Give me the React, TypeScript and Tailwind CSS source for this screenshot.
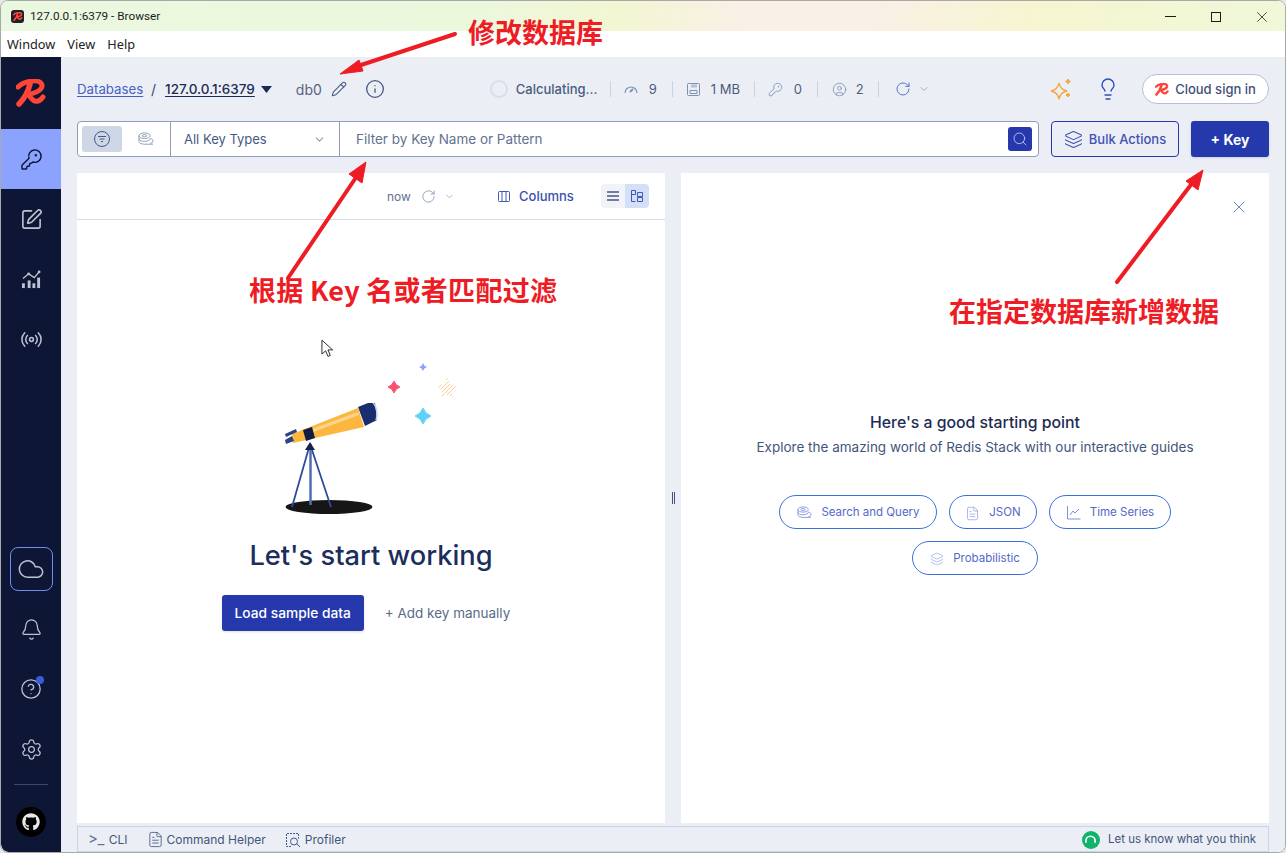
import {
  Bell,
  ChevronDown,
  CircleHelp,
  CircleUser,
  Cloud,
  FileText,
  Info,
  KeyRound,
  Layers,
  Lightbulb,
  Pencil,
  Radio,
  RotateCw,
  Search,
  Settings,
  SquarePen,
  X,
} from "lucide-react";
import { FaGithub } from "react-icons/fa";

const uiFont = "font-['Inter','Noto_Sans',sans-serif]";

function RedisLogo({ className }: { className?: string }) {
  return (
    <svg viewBox="0 0 30 28" fill="none" className={className}>
      <path d="M2 8C8 2 21 0 25 4C29 9 21 15 11 15" stroke="#ff4438" strokeWidth="5" strokeLinecap="round" />
      <path d="M14 5C12 13 7 21 3 25" stroke="#ff4438" strokeWidth="5.5" strokeLinecap="round" />
      <path d="M13 16C17 23 22 25 27 18" stroke="#ff4438" strokeWidth="5" strokeLinecap="round" />
    </svg>
  );
}

function StackIcon({ className }: { className?: string }) {
  return (
    <svg viewBox="0 0 18 16" fill="none" stroke="currentColor" strokeWidth="1" className={className}>
      <ellipse cx="8" cy="4" rx="6" ry="3" />
      <ellipse cx="8" cy="4" rx="2.5" ry="1.2" />
      <path d="M2 4v3c0 1.7 2.7 3 6 3s6-1.300 6-3" />
      <path d="M2 7v3c0 1.700 2.700 3 6 3h9" />
      <path d="M14 7c2 .3 3 1 3 2.500S16 12 14 12" />
    </svg>
  );
}

function ChartIcon({ className }: { className?: string }) {
  return (
    <svg viewBox="0 0 22 20" fill="currentColor" className={className}>
      <rect x="1" y="14" width="3" height="5" />
      <rect x="7" y="11" width="3" height="8" />
      <rect x="12" y="14" width="3" height="5" />
      <rect x="17" y="8" width="3" height="11" />
      <path d="M2 9l6-5 6 4 5-6" fill="none" stroke="currentColor" strokeWidth="1.500" />
      <circle cx="8" cy="4" r="1.500" />
      <circle cx="19" cy="2" r="1.500" />
    </svg>
  );
}

function GaugeIcon() {
  return (
    <svg viewBox="0 0 14 10" fill="none" stroke="#7f90b4" strokeWidth="1.200" className="w-[14px] h-[10px]">
      <path d="M1 9a6 6 0 0 1 12 0" />
      <path d="M6 8l3-3" strokeWidth="1.800" />
    </svg>
  );
}

function MemoryIcon() {
  return (
    <svg viewBox="0 0 13 13" fill="none" stroke="#7f90b4" className="w-[13px] h-[13px]">
      <rect x=".5" y=".5" width="12" height="12" rx="1" />
      <path d="M3 7.500h7v3H3zM5 1.500v3M7 1.500v3M9 1.500v3" />
    </svg>
  );
}

function Sep() {
  return <div className="w-px h-[16px] bg-[#c8d3e4]" />;
}

function SideItem({ children, className = "" }: { children: React.ReactNode; className?: string }) {
  return <div className={`h-[60px] flex items-center justify-center text-[#bcc3d3] ${className}`}>{children}</div>;
}

function Sidebar() {
  return (
    <aside className="w-[60px] h-full bg-[#0d1634] flex flex-col shrink-0 rounded-bl-lg">
      <div className="h-[72px] flex items-center justify-center">
        <RedisLogo className="w-[30px] h-[28px]" />
      </div>
      <SideItem className="bg-[#8ba2ff] !text-[#0d1634]">
        <KeyRound size={23} strokeWidth={1.500} />
      </SideItem>
      <SideItem>
        <SquarePen size={23} strokeWidth={1.700} />
      </SideItem>
      <SideItem>
        <ChartIcon className="w-[21px] h-[19px]" />
      </SideItem>
      <SideItem>
        <Radio size={23} strokeWidth={1.600} />
      </SideItem>
      <div className="flex-1" />
      <div className="w-[43px] h-[44px] mx-auto mb-[8px] rounded-[8px] border border-[#6f8cf0] flex items-center justify-center text-[#bcc3d3]">
        <Cloud size={28} strokeWidth={1.300} />
      </div>
      <SideItem>
        <Bell size={23} strokeWidth={1.300} />
      </SideItem>
      <SideItem className="relative">
        <CircleHelp size={22} strokeWidth={1.400} />
        <span className="absolute top-[17px] left-[35px] w-[8px] h-[8px] rounded-full bg-[#3a5bd9]" />
      </SideItem>
      <SideItem>
        <Settings size={23} strokeWidth={1.300} />
      </SideItem>
      <div className="mx-[13px] mt-[5px] h-px bg-[#3a4870]" />
      <div className="h-[67px] pt-[6px] flex items-center justify-center">
        <div className="w-[30px] h-[30px] rounded-full bg-black flex items-center justify-center text-[#e8e8e8]">
          <FaGithub size={18} />
        </div>
      </div>
    </aside>
  );
}

function TopBar() {
  return (
    <div className="h-[64px] flex items-center text-[14px] text-[#4a5b80]">
      <span className="pt-px text-[#465fc6] underline underline-offset-2 w-[66px] text-[13.250px]">Databases</span>
      <span className="ml-[8px] text-[#33466e]">/</span>
      <span className="ml-[9px] font-medium text-[#1c2b55] underline underline-offset-2 text-[13.500px]">127.0.0.1:6379</span>
      <svg viewBox="0 0 11 7" className="ml-[6px] w-[11px] h-[7px]" fill="#1c2b55">
        <path d="M0 0h11L5.500 7z" />
      </svg>
      <span className="ml-[24px] w-[28px] text-[#55637f]">db0</span>
      <Pencil size={16} strokeWidth={1.600} className="ml-[7px] text-[#465a86]" />
      <Info size={20} strokeWidth={1.600} className="ml-[18px] text-[#465a86]" />
      <div className="ml-[105px] w-[18px] h-[18px] rounded-full border-2 border-[#d6deea]" />
      <span className="ml-[8px] pt-px w-[81px] text-[13px] font-medium text-[#4a5b80] whitespace-nowrap">Calculating...</span>
      <div className="ml-[13px]"><Sep /></div>
      <div className="ml-[13px]"><GaugeIcon /></div>
      <span className="ml-[11px] pt-px w-[10px] text-[13px]">9</span>
      <div className="ml-[13px]"><Sep /></div>
      <div className="ml-[14px]"><MemoryIcon /></div>
      <span className="ml-[11px] pt-px w-[30px] text-[13px] whitespace-nowrap">1 MB</span>
      <div className="ml-[13px]"><Sep /></div>
      <KeyRound size={15} strokeWidth={1.300} className="ml-[13px] text-[#7f90b4]" />
      <span className="ml-[11px] pt-px w-[10px] text-[13px]">0</span>
      <div className="ml-[13px]"><Sep /></div>
      <CircleUser size={15} strokeWidth={1.300} className="ml-[14px] text-[#7f90b4]" />
      <span className="ml-[9px] pt-px w-[9px] text-[13px]">2</span>
      <div className="ml-[13px]"><Sep /></div>
      <RotateCw size={16} strokeWidth={1.500} className="ml-[16px] text-[#5c74c8]" />
      <ChevronDown size={12} className="ml-[7px] text-[#a3afc7]" />
      <div className="flex-1" />
      <svg viewBox="0 0 22 22" fill="none" stroke="#f5a83c" strokeWidth="1.300" className="w-[22px] h-[22px]">
        <path d="M9 5c1 5 3 7 8 8-5 1-7 3-8 8-1-5-3-7-8-8 5-1 7-3 8-8z" />
        <path d="M18 1v5M15.500 3.500h5M18 15v4M16 17h4" strokeWidth="1.800" />
      </svg>
      <Lightbulb size={24} strokeWidth={1.400} className="ml-[24px] text-[#2f4cc0]" />
      <div className="ml-[22px] w-[127px] h-[30px] rounded-full bg-white border border-[#b5bfd8] flex items-center justify-center gap-[6px]">
        <RedisLogo className="w-[14px] h-[13px]" />
        <span className="pt-px text-[13px] font-medium text-[#3f5078]">Cloud sign in</span>
      </div>
    </div>
  );
}

function FilterRow() {
  return (
    <div className="h-[36px] flex text-[14px]">
      <div className="w-[962px] flex bg-white border border-[#8f9cba] rounded-[4px] overflow-hidden">
        <div className="w-[93px] flex items-center pl-[4px] border-r border-[#8f9cba] shrink-0">
          <div className="w-[40px] h-[26px] rounded-[3px] bg-[#cdd7e6] flex items-center justify-center">
            <svg viewBox="0 0 16 16" fill="none" stroke="#465a86" className="w-[16px] h-[16px]">
              <circle cx="8" cy="8" r="7.500" />
              <path d="M4 5.500h8M5.500 8h5M7 10.500h2" />
            </svg>
          </div>
          <StackIcon className="ml-[15px] w-[17px] h-[15px] text-[#8d9ab5]" />
        </div>
        <div className="w-[169px] flex items-center justify-between pl-[13px] pr-[13px] border-r border-[#8f9cba] shrink-0 text-[#465a86] text-[13px]">
          <span className="pt-[2px]">All Key Types</span>
          <ChevronDown size={13} className="text-[#8d9ab5]" />
        </div>
        <div className="flex-1 flex items-center pl-[16px] pr-[6px] text-[#62728f] text-[13.500px]">
          <span className="flex-1 pt-px">Filter by Key Name or Pattern</span>
          <div className="w-[24px] h-[24px] rounded-[3px] bg-[#2539ad] flex items-center justify-center">
            <Search size={16} strokeWidth={1.300} className="text-[#c5cff5]" />
          </div>
        </div>
      </div>
      <div className="ml-[12px] pt-px w-[128px] border border-[#2539ad] rounded-[4px] flex items-center justify-center gap-[6px] text-[13px] font-medium text-[#3f52b5]">
        <Layers size={19} strokeWidth={1.300} />
        Bulk Actions
      </div>
      <div className="ml-[12px] w-[78px] bg-[#2539ad] rounded-[3px] flex items-center justify-center text-[14px] font-bold text-white shadow-sm">
        + Key
      </div>
    </div>
  );
}

function Telescope() {
  return (
    <svg viewBox="281 360 180 160" className="w-[180px] h-[160px]">
      <defs>
        <clipPath id="starClip">
          <path d="M447 377l3 7 7 2-5 5 1 7-6-3-6 3 1-7-5-5 7-2z" />
        </clipPath>
      </defs>
      <ellipse cx="329" cy="507" rx="43.500" ry="7" fill="#161616" />
      <path d="M310 444L292 507M310 444L331 507" stroke="#2f4a9c" strokeWidth="1.800" fill="none" />
      <path d="M310.500 444V505" stroke="#4d6fb8" strokeWidth="2.500" fill="none" />
      <path d="M305 450l5-8 5 8z" fill="#17234f" />
      <path d="M292 434L358 408L364 427L293 443Z" fill="#fdb73e" />
      <path d="M312 429L358 412L359 415L313 432Z" fill="#fed58c" />
      <path d="M303 430L312 427L315 438L306 441Z" fill="#101c45" />
      <path d="M358 407L368 403L375 403L377 420L365 426Z" fill="#1a2d6e" />
      <path d="M373 403C377 406 378 416 376 420" stroke="#c7d3ea" strokeWidth="1.500" fill="none" />
      <path d="M285 434L296 429L297 432L286 437ZM285 440L292 436L294 441L286 444Z" fill="#2b437f" />
      <path d="M394 381Q395.500 385.500 400 387Q395.500 388.500 394 393Q392.500 388.500 388 387Q392.500 385.500 394 381Z" fill="#f9526f" stroke="#f9526f" />
      <path d="M423 363Q423.800 366.200 427 367Q423.800 367.800 423 371Q422.200 367.800 419 367Q422.200 366.200 423 363Z" fill="#8ba2ff" />
      <path d="M423 408Q425 414 431 416Q425 418 423 424Q421 418 415 416Q421 414 423 408Z" fill="#5fd0fb" stroke="#5fd0fb" />
      <g clipPath="url(#starClip)" stroke="#fcd08a" strokeWidth="1">
        <path d="M434 388L448 374M436 390L450 376M438 392L452 378M440 394L454 380M442 396L456 382M444 398L458 384M446 400L460 386M448 402L462 388" />
      </g>
    </svg>
  );
}

function LeftPanel() {
  return (
    <section className="w-[588px] h-full bg-white flex flex-col">
      <div className="h-[47px] border-b border-[#d3dbe9] flex items-center pl-[310px] shrink-0">
        <span className="w-[23px] pt-px text-[12px] text-[#5f7191]">now</span>
        <RotateCw size={15} strokeWidth={1.300} className="ml-[11px] text-[#7f90b4]" />
        <ChevronDown size={11} className="ml-[8px] text-[#a3afc7]" />
        <svg viewBox="0 0 12 11" fill="none" stroke="#4058b8" className="ml-[43px] w-[12px] h-[11px]">
          <rect x=".5" y=".5" width="11" height="10" rx="1" />
          <path d="M4 .5v10M8 .5v10" />
        </svg>
        <span className="ml-[9px] pt-px w-[55px] text-[13px] font-medium text-[#3a4fae]">Columns</span>
        <div className="ml-[27px] flex h-[24px]">
          <div className="w-[24px] bg-[#f1f3f8] rounded-l-[4px] flex flex-col items-center justify-center gap-[2px]">
            <div className="w-[12px] h-[2px] bg-[#6f7fa0]" />
            <div className="w-[12px] h-[2px] bg-[#6f7fa0]" />
            <div className="w-[12px] h-[2px] bg-[#6f7fa0]" />
          </div>
          <div className="w-[24px] bg-[#d5e0f8] rounded-r-[4px] flex items-center justify-center">
            <svg viewBox="0 0 12 12" fill="none" stroke="#4058b8" className="w-[12px] h-[12px]">
              <path d="M.5 .5h4v4h-4zM.5 4.500v7h4M6.500 2.500h5v4h-5zM6.500 7.500h5v4h-5z" />
            </svg>
          </div>
        </div>
      </div>
      <div className="flex flex-col items-center pt-[140px]">
        <Telescope />
        <h2 className="mt-[20px] text-[27.250px] leading-[32px] font-medium text-[#1b2e5c]">Let's start working</h2>
        <div className="mt-[23px] pr-[10px] flex items-center">
          <div className="w-[142px] h-[36px] rounded-[3px] bg-[#2539ad] flex items-center justify-center text-[13.750px] font-medium text-white shadow-sm">
            Load sample data
          </div>
          <span className="ml-[21px] text-[13.500px] text-[#5a6a88]">+ Add key manually</span>
        </div>
      </div>
    </section>
  );
}

function Pill({ icon, label, width }: { icon: React.ReactNode; label: string; width: string }) {
  return (
    <div className={`h-[34px] pt-[2px] ${width} rounded-full border border-[#3b6fe0] flex items-center justify-center gap-[9px] text-[11.500px] text-[#5468c8]`}>
      {icon}
      {label}
    </div>
  );
}

function RightPanel() {
  return (
    <section className="flex-1 h-full bg-white relative flex flex-col items-center pt-[240px]">
      <X size={20} strokeWidth={1.100} className="absolute top-[24px] right-[20px] text-[#5f7db0]" />
      <h3 className="text-[15.800px] leading-[20px] font-medium text-[#1c2b55]">Here's a good starting point</h3>
      <p className="mt-[4px] text-[13.500px] leading-[20px] text-[#44557a]">Explore the amazing world of Redis Stack with our interactive guides</p>
      <div className="mt-[38px] flex gap-[12px]">
        <Pill width="w-[158px]" label="Search and Query" icon={<StackIcon className="w-[16px] h-[14px] text-[#7a92dc]" />} />
        <Pill width="w-[88px]" label="JSON" icon={<FileText size={15} strokeWidth={1} className="text-[#7a92dc]" />} />
        <Pill
          width="w-[122px]"
          label="Time Series"
          icon={
            <svg viewBox="0 0 15 14" fill="none" stroke="#7a92dc" className="w-[15px] h-[14px]">
              <path d="M1.500 0v13h13M4 9l3-4 2 2 4-4" />
            </svg>
          }
        />
      </div>
      <div className="mt-[12px]">
        <Pill width="w-[126px]" label="Probabilistic" icon={<Layers size={14} strokeWidth={1} className="text-[#7a92dc]" />} />
      </div>
    </section>
  );
}

function BottomBar() {
  return (
    <div className="mt-[3px] pt-px h-[26px] border border-[#c9d4e8] flex items-center text-[12px] text-[#44557a] pl-[10px] pr-[12px]">
      <span className="text-[#5f7191] text-[15px] tracking-[-0.5px]">&gt;_</span>
      <span className="ml-[5px]">CLI</span>
      <FileText size={17} strokeWidth={1.200} className="ml-[19px] text-[#465a86]" />
      <span className="ml-[3px]">Command Helper</span>
      <svg viewBox="0 0 16 16" fill="none" stroke="#465a86" className="ml-[19px] w-[16px] h-[16px]">
        <path d="M6 14.500H1.500v-13h12v5" strokeDasharray="2 1" />
        <circle cx="9" cy="9.500" r="3.500" />
        <path d="M12 12l3 3" />
      </svg>
      <span className="ml-[4px]">Profiler</span>
      <div className="flex-1" />
      <div className="w-[18px] h-[18px] rounded-full bg-[#11b36b] flex items-center justify-center">
        <svg viewBox="0 0 14 10" fill="none" stroke="white" strokeWidth="1.800" className="w-[13px] h-[10px]">
          <path d="M2 8V6a5 5 0 0 1 10 0v2" />
        </svg>
      </div>
      <span className="ml-[8px] text-[11.500px]">Let us know what you think</span>
    </div>
  );
}

function Annotations() {
  const cjk = "absolute whitespace-nowrap font-['Noto_Sans_CJK_SC',sans-serif] font-bold text-[27px] leading-[36px] text-[#ee1c25]";
  return (
    <>
      <svg viewBox="0 0 1286 853" className="absolute inset-0 w-[1286px] h-[853px] pointer-events-none" fill="#ee1c25" stroke="#ee1c25">
        <path d="M455 34L358 66" strokeWidth="4" strokeLinecap="round" />
        <path d="M340 74L359 60L363 71Z" strokeWidth="1" />
        <path d="M288 278L357 176" strokeWidth="4" strokeLinecap="round" />
        <path d="M366 162L362 183L349 174Z" strokeWidth="1" />
        <path d="M1117 282L1193 182" strokeWidth="4" strokeLinecap="round" />
        <path d="M1203 170L1198 190L1186 181Z" strokeWidth="1" />
      </svg>
      <span className={`${cjk} left-[468px] top-[14px]`}>修改数据库</span>
      <span className={`${cjk} tracking-[0.27px] left-[249px] top-[272px]`}>根据 Key 名或者匹配过滤</span>
      <span className={`${cjk} left-[949px] top-[293px]`}>在指定数据库新增数据</span>
      {/* mouse pointer */}
      <svg viewBox="0 0 14 20" className="absolute left-[321px] top-[339px] w-[13px] h-[19px]" fill="white" stroke="#222">
        <path d="M1 1v15l4-3.500 2.500 6 2.500-1-2.500-6h5z" />
      </svg>
    </>
  );
}

export default function App() {
  return (
    <div className={`relative w-[1286px] h-[853px] overflow-hidden bg-[#e8e8e8] ${uiFont}`}>
      <div className="w-full h-full flex flex-col bg-white border border-[#a9a9a9] rounded-t-lg rounded-b-lg overflow-hidden">
        <div className="h-[30px] pt-px shrink-0 flex items-center bg-[linear-gradient(100deg,#ebf8e0_0%,#ecf8dc_38%,#f2f6d2_48%,#f9f0e6_58%,#f9f0e6_68%,#f6f5d0_80%,#eff8d8_100%)] pl-[10px] text-[11.750px] text-[#1b1b1b] font-['Roboto',sans-serif]">
          <div className="w-[13px] h-[13px] rounded-[3px] bg-[#1d2027] flex items-center justify-center">
            <RedisLogo className="w-[10px] h-[9px]" />
          </div>
          <span className="ml-[6px]">127.0.0.1:6379 - Browser</span>
          <div className="flex-1" />
          <div className="w-[11px] h-px bg-[#1b1b1b]" />
          <div className="ml-[35px] w-[10px] h-[10px] border border-[#1b1b1b]" />
          <X size={18} strokeWidth={1} className="ml-[32px] mr-[14px] text-[#1b1b1b]" />
        </div>
        <div className="h-[26px] pt-[2px] shrink-0 flex items-center gap-[12px] pl-[6px] bg-white text-[12.750px] text-[#222] font-['Noto_Sans',sans-serif]">
          <span>Window</span>
          <span>View</span>
          <span>Help</span>
        </div>
        <div className="flex-1 min-h-0 flex bg-[#ebeff5]">
          <Sidebar />
          <main className="flex-1 min-w-0 flex flex-col pl-[16px] pr-[16px]">
            <TopBar />
            <FilterRow />
            <div className="mt-[16px] h-[650px] flex relative">
              <LeftPanel />
              <div className="w-[16px] flex items-center justify-center">
                <div className="flex gap-[1px] h-[12px]">
                  <div className="w-px bg-[#44557a]" />
                  <div className="w-px bg-[#44557a]" />
                </div>
              </div>
              <RightPanel />
            </div>
            <BottomBar />
          </main>
        </div>
      </div>
      <Annotations />
    </div>
  );
}
